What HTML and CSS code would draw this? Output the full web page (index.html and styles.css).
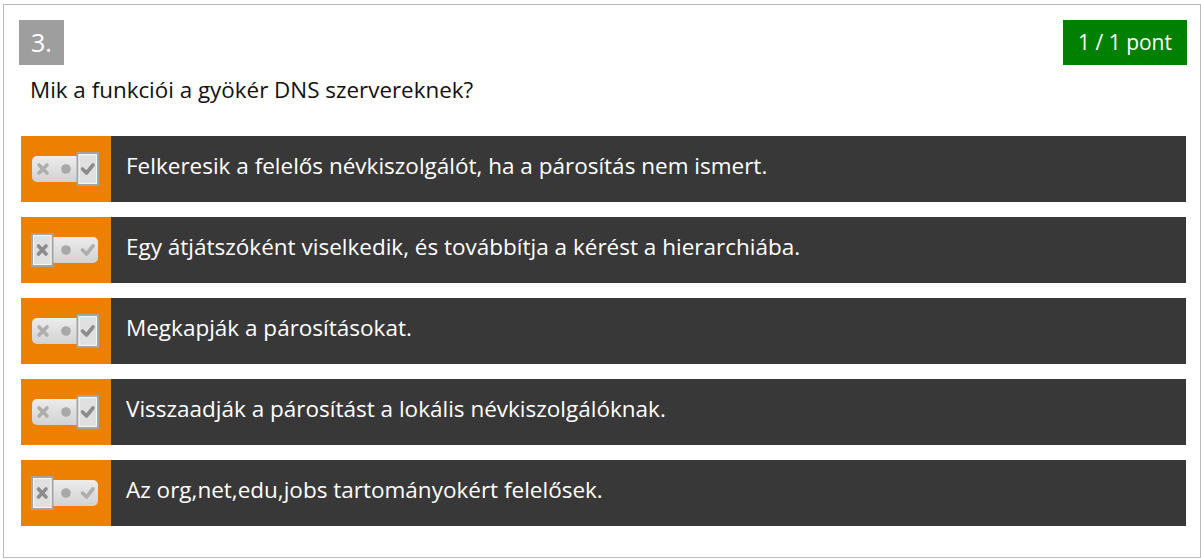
FILE: index.html
```html
<!DOCTYPE html>
<html lang="hu">
<head>
<meta charset="utf-8">
<title>Kérdés 3</title>
<link rel="stylesheet" href="styles.css">
</head>
<body>
<div class="question">
  <div class="q-head">
    <div class="q-num">3.</div>
    <div class="q-score">1 / 1 pont</div>
  </div>
  <p class="q-text">Mik a funkciói a gyökér DNS szervereknek?</p>
  <ul class="answers">
    <li class="answer">
      <div class="toggle">
        <svg width="68" height="34" viewBox="0 0 68 34"><defs><linearGradient id="g1" x1="0" y1="0" x2="0" y2="1"><stop offset="0" stop-color="#ececec"/><stop offset="1" stop-color="#d2d2d2"/></linearGradient></defs><rect x="1" y="4" width="66" height="26" rx="5" fill="url(#g1)"/><path d="M8 13 L16 21 M16 13 L8 21" stroke="#aeaeae" stroke-width="3.6" stroke-linecap="round"/><circle cx="35" cy="17" r="4.8" fill="#a8a8a8"/><rect x="46.5" y="1" width="20.5" height="32" fill="#e0e0e0" stroke="#a4a4a4" stroke-width="2"/><rect x="48" y="2.5" width="17.5" height="29" fill="none" stroke="#f6f6f6" stroke-width="1"/><path d="M51.5 17 L55.5 21 L62 13" fill="none" stroke="#8c8c8c" stroke-width="3.6" stroke-linecap="round" stroke-linejoin="round"/></svg>
      </div>
      <div class="answer-text">Felkeresik a felelős névkiszolgálót, ha a párosítás nem ismert.</div>
    </li>
    <li class="answer">
      <div class="toggle">
        <svg width="68" height="34" viewBox="0 0 68 34"><defs><linearGradient id="g2" x1="0" y1="0" x2="0" y2="1"><stop offset="0" stop-color="#ececec"/><stop offset="1" stop-color="#d2d2d2"/></linearGradient></defs><rect x="1" y="4" width="66" height="26" rx="5" fill="url(#g2)"/><rect x="1" y="1" width="20.5" height="32" fill="#e0e0e0" stroke="#a4a4a4" stroke-width="2"/><rect x="2.5" y="2.5" width="17.5" height="29" fill="none" stroke="#f6f6f6" stroke-width="1"/><path d="M7.5 13 L15 21 M15 13 L7.5 21" stroke="#8c8c8c" stroke-width="3.6" stroke-linecap="round"/><circle cx="35" cy="17" r="4.8" fill="#a8a8a8"/><path d="M51.5 17 L55.5 21 L62 13" fill="none" stroke="#aeaeae" stroke-width="3.6" stroke-linecap="round" stroke-linejoin="round"/></svg>
      </div>
      <div class="answer-text">Egy átjátszóként viselkedik, és továbbítja a kérést a hierarchiába.</div>
    </li>
    <li class="answer">
      <div class="toggle">
        <svg width="68" height="34" viewBox="0 0 68 34"><defs><linearGradient id="g3" x1="0" y1="0" x2="0" y2="1"><stop offset="0" stop-color="#ececec"/><stop offset="1" stop-color="#d2d2d2"/></linearGradient></defs><rect x="1" y="4" width="66" height="26" rx="5" fill="url(#g3)"/><path d="M8 13 L16 21 M16 13 L8 21" stroke="#aeaeae" stroke-width="3.6" stroke-linecap="round"/><circle cx="35" cy="17" r="4.8" fill="#a8a8a8"/><rect x="46.5" y="1" width="20.5" height="32" fill="#e0e0e0" stroke="#a4a4a4" stroke-width="2"/><rect x="48" y="2.5" width="17.5" height="29" fill="none" stroke="#f6f6f6" stroke-width="1"/><path d="M51.5 17 L55.5 21 L62 13" fill="none" stroke="#8c8c8c" stroke-width="3.6" stroke-linecap="round" stroke-linejoin="round"/></svg>
      </div>
      <div class="answer-text">Megkapják a párosításokat.</div>
    </li>
    <li class="answer">
      <div class="toggle">
        <svg width="68" height="34" viewBox="0 0 68 34"><defs><linearGradient id="g4" x1="0" y1="0" x2="0" y2="1"><stop offset="0" stop-color="#ececec"/><stop offset="1" stop-color="#d2d2d2"/></linearGradient></defs><rect x="1" y="4" width="66" height="26" rx="5" fill="url(#g4)"/><path d="M8 13 L16 21 M16 13 L8 21" stroke="#aeaeae" stroke-width="3.6" stroke-linecap="round"/><circle cx="35" cy="17" r="4.8" fill="#a8a8a8"/><rect x="46.5" y="1" width="20.5" height="32" fill="#e0e0e0" stroke="#a4a4a4" stroke-width="2"/><rect x="48" y="2.5" width="17.5" height="29" fill="none" stroke="#f6f6f6" stroke-width="1"/><path d="M51.5 17 L55.5 21 L62 13" fill="none" stroke="#8c8c8c" stroke-width="3.6" stroke-linecap="round" stroke-linejoin="round"/></svg>
      </div>
      <div class="answer-text">Visszaadják a párosítást a lokális névkiszolgálóknak.</div>
    </li>
    <li class="answer">
      <div class="toggle">
        <svg width="68" height="34" viewBox="0 0 68 34"><defs><linearGradient id="g5" x1="0" y1="0" x2="0" y2="1"><stop offset="0" stop-color="#ececec"/><stop offset="1" stop-color="#d2d2d2"/></linearGradient></defs><rect x="1" y="4" width="66" height="26" rx="5" fill="url(#g5)"/><rect x="1" y="1" width="20.5" height="32" fill="#e0e0e0" stroke="#a4a4a4" stroke-width="2"/><rect x="2.5" y="2.5" width="17.5" height="29" fill="none" stroke="#f6f6f6" stroke-width="1"/><path d="M7.5 13 L15 21 M15 13 L7.5 21" stroke="#8c8c8c" stroke-width="3.6" stroke-linecap="round"/><circle cx="35" cy="17" r="4.8" fill="#a8a8a8"/><path d="M51.5 17 L55.5 21 L62 13" fill="none" stroke="#aeaeae" stroke-width="3.6" stroke-linecap="round" stroke-linejoin="round"/></svg>
      </div>
      <div class="answer-text">Az org,net,edu,jobs tartományokért felelősek.</div>
    </li>
  </ul>
</div>
</body>
</html>
```
FILE: styles.css
```css
html, body {
  margin: 0;
  padding: 0;
  background: #fff;
}
body {
  font-family: "Open Sans", "Liberation Sans", sans-serif;
  overflow: hidden;
}
.question {
  box-sizing: border-box;
  width: 1198px;
  height: 554px;
  margin: 4px 0 0 3px;
  border: 1px solid #bbbbbb;
  padding: 15px 13px 0 15px;
}
.q-head {
  display: flex;
  justify-content: space-between;
  align-items: flex-start;
}
.q-num {
  width: 45px;
  height: 45px;
  background: #9e9e9e;
  color: #fff;
  font-size: 25px;
  line-height: 45px;
  text-align: center;
}
.q-score {
  height: 45px;
  padding: 0 15px;
  background: #008000;
  color: #fff;
  font-size: 21px;
  line-height: 45px;
}
.q-text {
  margin: 10px 0 0 11px;
  font-size: 22.4px;
  line-height: 30px;
  color: #111;
}
.answers {
  list-style: none;
  margin: 31px 1px 0 2px;
  padding: 0;
  display: flex;
  flex-direction: column;
  gap: 15px;
}
.answer {
  display: flex;
  height: 66px;
  background: #383838;
}
.toggle {
  width: 90px;
  flex: none;
  background: #ee8000;
  display: flex;
  align-items: center;
  justify-content: center;
  padding-right: 3px;
  box-sizing: border-box;
}
.toggle svg {
  display: block;
}
.answer-text {
  display: flex;
  align-items: center;
  padding: 0 0 7px 15px;
  color: #fff;
  font-size: 22.5px;
  line-height: 30px;
}
```
